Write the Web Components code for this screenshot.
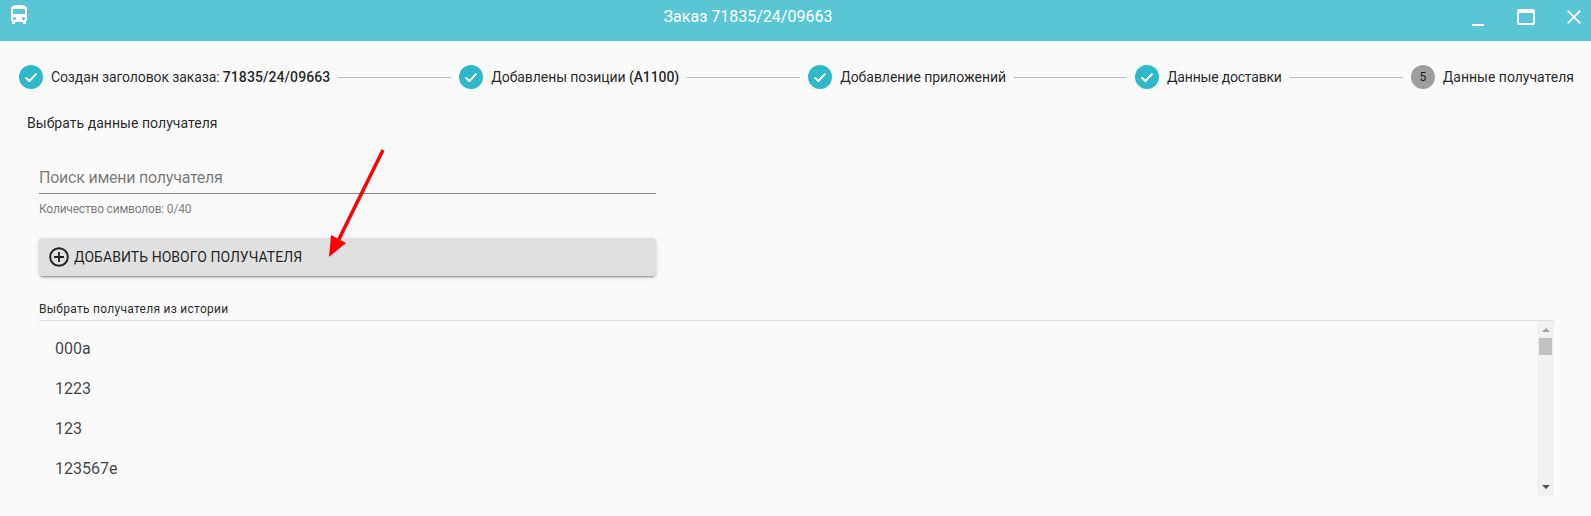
<!DOCTYPE html>
<html lang="ru">
<head>
<meta charset="utf-8">
<title>Заказ 71835/24/09663</title>
<style>
  html, body { margin: 0; height: 100%; background: #fafafa; overflow: hidden; }
  body { font-family: Roboto, "Liberation Sans", sans-serif; color: rgba(0, 0, 0, 0.87); }
</style>
</head>
<body>
<order-dialog>
  <title-bar title-text="Заказ 71835/24/09663"></title-bar>
  <order-stepper>
    <step-item done style="letter-spacing:-0.12px">Создан заголовок заказа: <b style="letter-spacing:0.08px">71835/24/09663</b></step-item>
    <step-item done style="letter-spacing:-0.08px">Добавлены позиции <b>(A1100)</b></step-item>
    <step-item done style="letter-spacing:-0.04px">Добавление приложений</step-item>
    <step-item done style="letter-spacing:-0.2px">Данные доставки</step-item>
    <step-item number="5">Данные получателя</step-item>
  </order-stepper>
  <recipient-form></recipient-form>
  <history-list heading="Выбрать получателя из истории">
    <history-row>000a</history-row>
    <history-row>1223</history-row>
    <history-row>123</history-row>
    <history-row>123567e</history-row>
  </history-list>
  <red-arrow></red-arrow>
</order-dialog>

<script>
class OrderDialog extends HTMLElement {
  constructor() {
    super();
    this.attachShadow({ mode: 'open' });
    this.shadowRoot.innerHTML = `
      <style>
        :host { display: block; position: relative; height: 516px; background: #fafafa; }
      </style>
      <slot></slot>
    `;
  }
}

class TitleBar extends HTMLElement {
  constructor() {
    super();
    this.attachShadow({ mode: 'open' });
    this.shadowRoot.innerHTML = `
      <style>
        :host { display: flex; height: 41px; background: #5bc6d3; color: #fff; }
        .bus { flex: none; width: 24px; height: 24px; margin: 3px 0 0 7px; fill: #fff; }
        .title { flex: 1; text-align: center; font-size: 16px; line-height: 18px; padding: 8px 7px 0 0; }
        .btn { flex: none; fill: none; stroke: #fff; }
        .min { width: 12px; height: 2px; margin: 24px 33px 0 0; background: #fff; }
        .max { width: 18px; height: 16px; margin: 9px 32px 0 0; }
        .close { width: 14px; height: 14px; margin: 10px 10px 0 0; }
      </style>
      <svg class="bus" viewBox="0 0 24 24"><path d="M4 16c0 .88.39 1.67 1 2.22V20c0 .55.45 1 1 1h1c.55 0 1-.45 1-1v-1h8v1c0 .55.45 1 1 1h1c.55 0 1-.45 1-1v-1.78c.61-.55 1-1.34 1-2.22V6c0-3.5-3.58-4-8-4s-8 .5-8 4v10zm3.5 1c-.83 0-1.5-.67-1.5-1.5S6.67 14 7.5 14s1.5.67 1.5 1.5S8.33 17 7.5 17zm9 0c-.83 0-1.5-.67-1.5-1.5s.67-1.5 1.5-1.5 1.5.67 1.5 1.5-.67 1.5-1.5 1.5zm1.5-6H6V6h12v5z"/></svg>
      <div class="title">${this.getAttribute('title-text') || ''}</div>
      <div class="min"></div>
      <svg class="btn max" viewBox="0 0 18 16"><rect x="1" y="1" width="16" height="14" rx="1" stroke-width="2"/><path d="M1 3h16" stroke-width="2"/></svg>
      <svg class="btn close" viewBox="0 0 14 14"><path d="M.7.7l12.6 12.6M13.3.7L.7 13.3" stroke-width="1.8"/></svg>
    `;
  }
}

class OrderStepper extends HTMLElement {
  constructor() {
    super();
    this.attachShadow({ mode: 'open' });
    this.shadowRoot.innerHTML = `
      <style>
        :host { display: flex; align-items: center; padding: 24px 17px 0 19px; }
        ::slotted(step-item:not(:last-child)) { flex: 1 1 auto; }
      </style>
      <slot></slot>
    `;
  }
}

class StepItem extends HTMLElement {
  constructor() {
    super();
    this.attachShadow({ mode: 'open' });
    const isDone = this.hasAttribute('done');
    const badge = isDone
      ? '<svg viewBox="0 0 24 24" width="24" height="24"><circle cx="12" cy="12" r="12" fill="#2fb9c8"/><path d="M6.6 12.4l3.7 3.6 7.2-7.4" fill="none" stroke="#fff" stroke-width="2"/></svg>'
      : `<span class="num">${this.getAttribute('number') || ''}</span>`;
    this.shadowRoot.innerHTML = `
      <style>
        :host { display: flex; align-items: center; font-size: 14px; line-height: 24px; color: rgba(0, 0, 0, 0.87); white-space: nowrap; }
        .num { display: block; width: 24px; height: 24px; border-radius: 50%; background: #9e9e9e; font-size: 12px; text-align: center; }
        svg, .num { flex: none; }
        .label { margin-left: 8px; }
        .line { flex: 1; height: 1px; background: #bdbdbd; margin: 0 8px; }
        ::slotted(b) { font-weight: 500; }
      </style>
      ${badge}
      <span class="label"><slot></slot></span>
      ${this.nextElementSibling ? '<div class="line"></div>' : ''}
    `;
  }
}

class RecipientForm extends HTMLElement {
  constructor() {
    super();
    this.attachShadow({ mode: 'open' });
    this.shadowRoot.innerHTML = `
      <style>
        :host { display: block; padding-top: 26px; }
        .heading { font-size: 14px; line-height: 16px; margin-left: 27px; letter-spacing: 0.04px; color: rgba(0, 0, 0, 0.87); }
        .box { width: 617px; margin: 37px 0 0 39px; }
        .search { height: 25px; border-bottom: 1px solid #8a8a8a; font-size: 16px; line-height: 20px; letter-spacing: -0.23px; color: rgba(0, 0, 0, 0.54); }
        .hint { font-size: 12px; line-height: 14px; letter-spacing: -0.2px; margin-top: 8px; color: rgba(0, 0, 0, 0.54); }
        .add { display: flex; align-items: center; height: 38px; margin-top: 22px; padding-left: 10px; border-radius: 4px; background: #e0e0e0; font-size: 14px; letter-spacing: 0.05px; color: rgba(0, 0, 0, 0.87);
          box-shadow: 0 3px 1px -2px rgba(0,0,0,.2), 0 2px 2px 0 rgba(0,0,0,.14), 0 1px 5px 0 rgba(0,0,0,.12); }
        .add svg { flex: none; margin-right: 5px; }
      </style>
      <div class="heading">Выбрать данные получателя</div>
      <div class="box">
        <div class="search">Поиск имени получателя</div>
        <div class="hint">Количество символов: 0/40</div>
        <div class="add">
          <svg width="20" height="20" viewBox="0 0 20 20" fill="none" stroke="#212121"><circle cx="10" cy="10" r="8.8" stroke-width="1.9"/><path d="M10 5v10M5 10h10" stroke-width="1.9"/></svg>
          ДОБАВИТЬ НОВОГО ПОЛУЧАТЕЛЯ
        </div>
      </div>
    `;
  }
}

class HistoryList extends HTMLElement {
  constructor() {
    super();
    this.attachShadow({ mode: 'open' });
    this.shadowRoot.innerHTML = `
      <style>
        :host { display: block; margin: 26px 37px 0 39px; }
        .caption { font-size: 12px; line-height: 14px; height: 18px; letter-spacing: 0.28px; border-bottom: 1px solid #e0e0e0; color: rgba(0, 0, 0, 0.87); }
        .body { display: flex; height: 175px; }
        .rows { flex: 1; padding-top: 8px; }
        .bar { flex: none; display: flex; flex-direction: column; align-items: center; width: 17px; background: #f1f1f1; }
        .up, .down { width: 0; height: 0; border-left: 4px solid transparent; border-right: 4px solid transparent; }
        .up { margin-top: 7px; border-bottom: 4px solid #a3a3a3; }
        .thumb { width: 13px; height: 17px; margin-top: 6px; background: #c1c1c1; }
        .down { margin-top: auto; margin-bottom: 7px; border-top: 4px solid #505050; }
      </style>
      <div class="caption">${this.getAttribute('heading') || ''}</div>
      <div class="body">
        <div class="rows"><slot></slot></div>
        <div class="bar"><div class="up"></div><div class="thumb"></div><div class="down"></div></div>
      </div>
    `;
  }
}

class HistoryRow extends HTMLElement {
  constructor() {
    super();
    this.attachShadow({ mode: 'open' });
    this.shadowRoot.innerHTML = `
      <style>
        :host { display: block; height: 40px; line-height: 40px; padding-left: 16px; font-size: 16px; color: rgba(0, 0, 0, 0.75); }
      </style>
      <slot></slot>
    `;
  }
}

// annotation drawn on top of the screenshot
class RedArrow extends HTMLElement {
  constructor() {
    super();
    this.attachShadow({ mode: 'open' });
    this.shadowRoot.innerHTML = `
      <style>
        :host { position: absolute; left: 320px; top: 145px; width: 70px; height: 120px; pointer-events: none; }
      </style>
      <svg width="70" height="120" viewBox="0 0 70 120">
        <path d="M63 5L18 96" stroke="#fe0000" stroke-width="3.5" fill="none"/>
        <path d="M9 112L11 90L26 98Z" fill="#fe0000"/>
      </svg>
    `;
  }
}

customElements.define('order-dialog', OrderDialog);
customElements.define('title-bar', TitleBar);
customElements.define('order-stepper', OrderStepper);
customElements.define('step-item', StepItem);
customElements.define('recipient-form', RecipientForm);
customElements.define('history-list', HistoryList);
customElements.define('history-row', HistoryRow);
customElements.define('red-arrow', RedArrow);
</script>
</body>
</html>
